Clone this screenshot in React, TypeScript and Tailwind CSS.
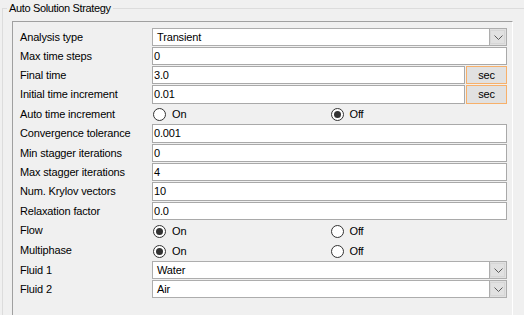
import React from 'react'

type Row =
  | { kind: 'text'; label: string; value: string; unit?: string; h: number }
  | { kind: 'combo'; label: string; value: string; h: number }
  | { kind: 'radio'; label: string; on: boolean; h: number }

const rows: Row[] = [
  { kind: 'combo', label: 'Analysis type', value: 'Transient', h: 19 },
  { kind: 'text', label: 'Max time steps', value: '0', h: 19 },
  { kind: 'text', label: 'Final time', value: '3.0', unit: 'sec', h: 19 },
  { kind: 'text', label: 'Initial time increment', value: '0.01', unit: 'sec', h: 20 },
  { kind: 'radio', label: 'Auto time increment', on: false, h: 19 },
  { kind: 'text', label: 'Convergence tolerance', value: '0.001', h: 20 },
  { kind: 'text', label: 'Min stagger iterations', value: '0', h: 19 },
  { kind: 'text', label: 'Max stagger iterations', value: '4', h: 19 },
  { kind: 'text', label: 'Num. Krylov vectors', value: '10', h: 20 },
  { kind: 'text', label: 'Relaxation factor', value: '0.0', h: 19 },
  { kind: 'radio', label: 'Flow', on: true, h: 20 },
  { kind: 'radio', label: 'Multiphase', on: true, h: 20 },
  { kind: 'combo', label: 'Fluid 1', value: 'Water', h: 19 },
  { kind: 'combo', label: 'Fluid 2', value: 'Air', h: 19 }
]

const Chevron = () => (
  <svg width="9" height="5" viewBox="0 0 9 5" fill="none">
    <path d="M0.5 0.5 L4.5 4.5 L8.5 0.5" stroke="#5a5a5a" strokeWidth="1" />
  </svg>
)

const Radio: React.FC<{ checked: boolean; label: string }> = ({ checked, label }) => (
  <div className="flex flex-1 items-center gap-[6px] pl-[1px]">
    <span className="flex h-[13px] w-[13px] items-center justify-center rounded-full border border-[#333] bg-white">
      {checked && <span className="h-[7px] w-[7px] rounded-full bg-[#333]" />}
    </span>
    <span>{label}</span>
  </div>
)

const Field: React.FC<{ row: Row }> = ({ row }) => {
  if (row.kind === 'radio') {
    return (
      <div className="flex h-full items-center">
        <Radio checked={row.on} label="On" />
        <Radio checked={!row.on} label="Off" />
      </div>
    )
  }
  if (row.kind === 'combo') {
    return (
      <div className="flex h-[calc(100%-1px)] border border-[#adadad] bg-white">
        <div className="flex flex-1 items-center pl-[4px]">{row.value}</div>
        <div className="flex w-[17px] items-center justify-center border-l border-[#adadad] bg-[#e1e1e1] outline outline-1 -outline-offset-2 outline-[#d6d6d6]">
          <Chevron />
        </div>
      </div>
    )
  }
  return (
    <div className="flex h-[calc(100%-1px)] gap-[1px]">
      <div className="flex flex-1 items-center border border-[#a9a9a9] bg-white pl-[1px]">
        {row.value}
      </div>
      {row.unit && (
        <div className="flex w-[41px] items-center justify-center border border-[#f7b06a] bg-[#e1e1e1]">
          {row.unit}
        </div>
      )}
    </div>
  )
}

export default function App() {
  return (
    <div
      className="h-[315px] w-[524px] overflow-hidden bg-[#f0f0f0] text-[11px] tracking-[-0.15px] text-black"
      style={{ fontFamily: '"Liberation Sans", Arial, sans-serif' }}>
      <fieldset className="ml-[2px] h-[340px] border-l border-t border-[#dcdcdc] pl-[9px] pt-[2px]">
        <legend className="-ml-[5px] px-[2px] leading-[17px] tracking-[-0.35px]">Auto Solution Strategy</legend>
        <div className="mt-[2px] h-[320px] w-[501px] border-l border-r border-t border-[#a0a0a0] border-r-white pl-[7px] pr-[5px] pt-[6px]">
          {rows.map((row) => (
            <div
              key={row.label}
              className="grid grid-cols-[132px_355px]"
              style={{ height: row.h }}>
              <div className="flex h-[calc(100%-1px)] items-center">{row.label}</div>
              <Field row={row} />
            </div>
          ))}
        </div>
      </fieldset>
    </div>
  )
}
